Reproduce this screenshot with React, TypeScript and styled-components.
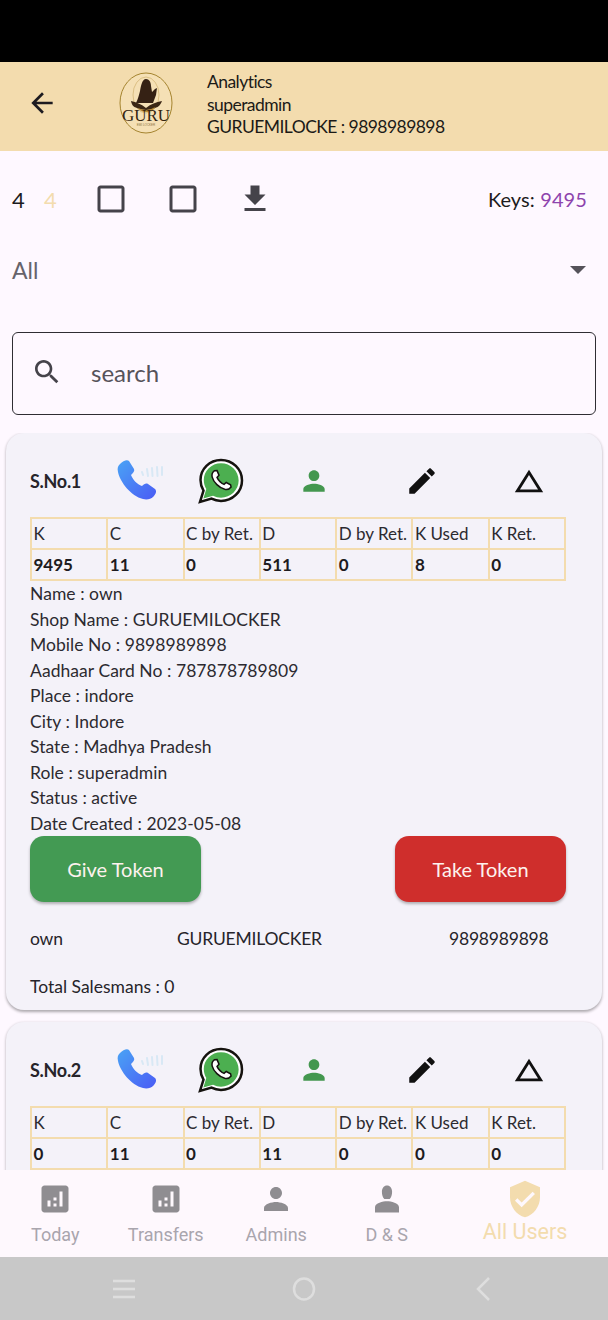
import { FC } from 'react';
import styled, { createGlobalStyle } from 'styled-components';

const GlobalStyle = createGlobalStyle`
  html, body { margin: 0; padding: 0; background: #000; }
  * { box-sizing: border-box; }
  body { font-family: 'Lato', 'Liberation Sans', sans-serif; color: #1d1b20; }
`;

const Screen = styled.div`
  width: 608px;
  height: 1320px;
  display: flex;
  flex-direction: column;
  overflow: hidden;
  background: #fef8ff;
`;

const StatusBar = styled.div`
  height: 62px;
  flex: none;
  background: #000;
`;

const Header = styled.header`
  height: 89px;
  flex: none;
  display: flex;
  align-items: center;
  background: #f3dcae;
  padding: 0 0 7px 26px;
`;

const BackButton = styled.div`
  width: 92px;
  display: flex;
`;

const HeaderText = styled.div`
  margin: 4px 0 0 33px;
  font-size: 17.5px;
  line-height: 22.5px;
  letter-spacing: -0.55px;
  color: #1b1a17;
`;

const Toolbar = styled.div`
  height: 96px;
  flex: none;
  display: flex;
  align-items: center;
  padding: 0 21px 0 12px;
`;

const Count = styled.span<{ $muted?: boolean }>`
  font-size: 22px;
  width: 32px;
  color: ${({ $muted }) => ($muted ? '#f3dcae' : '#1d1b20')};
`;

const ToolIcon = styled.div`
  width: 72px;
  display: flex;
  justify-content: center;
  margin-left: -1px;
  margin-right: 1px;
`;

const Keys = styled.div`
  margin-left: auto;
  font-size: 20px;
  letter-spacing: 0.1px;
`;

const KeysValue = styled.span`
  color: #8e44ad;
`;

const SelectRow = styled.div`
  height: 48px;
  flex: none;
  margin-top: -1px;
  display: flex;
  align-items: center;
  justify-content: space-between;
  padding: 0 22px 0 12px;
  font-size: 23px;
  color: #66636b;
`;

const Caret = styled.div`
  width: 0;
  height: 0;
  border-left: 8px solid transparent;
  border-right: 8px solid transparent;
  border-top: 8px solid #55525a;
`;

const SearchBox = styled.div`
  height: 83px;
  flex: none;
  margin: 38px 12px 18px;
  border: 1.5px solid #2f2d33;
  border-radius: 6px;
  display: flex;
  align-items: center;
  padding: 0 0 3px 18px;
  font-size: 24px;
  color: #56535a;
  gap: 28px;
`;

const CardList = styled.div`
  flex: 1;
  min-height: 0;
  overflow: hidden;
  display: flex;
  flex-direction: column;
  gap: 12px;
  padding: 0 6px;
`;

const Card = styled.section`
  flex: none;
  height: 577px;
  background: #f4f2f9;
  border-radius: 18px;
  box-shadow: 0 1.5px 3px rgba(0, 0, 0, 0.32);
  padding: 0 36px 0 24px;
  display: flex;
  flex-direction: column;
`;

const ActionRow = styled.div`
  height: 84px;
  flex: none;
  display: flex;
  align-items: center;
  padding-top: 12px;
`;

const SerialNo = styled.div`
  width: 89px;
  font-size: 18px;
  font-weight: 700;
  letter-spacing: -0.3px;
  color: #26242a;
`;

const ActionSlot = styled.div<{ $width: number }>`
  width: ${({ $width }) => $width}px;
  display: flex;
  justify-content: center;
  flex: none;
`;

const StatsTable = styled.table`
  border-collapse: collapse;
  table-layout: fixed;
  width: 536px;
  flex: none;
  td {
    border: 2px solid #f3dcae;
    height: 31px;
    padding: 0 0 0 1.500px;
    font-size: 17px;
    white-space: nowrap;
    overflow: hidden;
    color: #2c2a30;
  }
  tr:last-child td {
    font-weight: 700;
    color: #1d1b20;
  }
`;

const DetailList = styled.div`
  font-size: 17.5px;
  line-height: 25.5px;
  letter-spacing: 0.05px;
  color: #2c2a30;
`;

const TokenRow = styled.div`
  display: flex;
  justify-content: space-between;
`;

const TokenButton = styled.button<{ $bg: string }>`
  width: 171px;
  height: 66px;
  border: 0;
  border-radius: 14px;
  background: ${({ $bg }) => $bg};
  color: #fdf2ee;
  font-family: inherit;
  font-size: 20px;
  box-shadow: 0 2px 3px rgba(0, 0, 0, 0.28);
`;

const ContactRow = styled.div`
  display: grid;
  grid-template-columns: 147px 272px 1fr;
  margin-top: 25px;
  font-size: 17.5px;
  line-height: 24px;
  letter-spacing: -0.2px;
  color: #26242a;
`;

const SalesmanTotal = styled.div`
  margin-top: 24px;
  font-size: 17.5px;
  line-height: 24px;
  color: #26242a;
`;

const BottomNav = styled.nav`
  height: 87px;
  flex: none;
  display: grid;
  grid-template-columns: repeat(4, 110.5px) 1fr;
  background: #fef8fd;
`;

const NavItem = styled.div<{ $active?: boolean }>`
  display: flex;
  flex-direction: column;
  align-items: center;
  padding-top: ${({ $active }) => ($active ? '9px' : '11px')};
  gap: ${({ $active }) => ($active ? '1px' : '6px')};
  font-family: 'Roboto', sans-serif;
  font-size: ${({ $active }) => ($active ? '21.5px' : '18px')};
  line-height: 24px;
  color: ${({ $active }) => ($active ? '#f3dcae' : '#a9a5ad')};
`;

const SystemNav = styled.div`
  height: 63px;
  flex: none;
  background: #c8c8c8;
  display: grid;
  grid-template-columns: 248px 112px 1fr;
  align-items: center;
  justify-items: center;
`;

const Icon: FC<{ d: string; size: number; color: string }> = ({ d, size, color }) => (
  <svg width={size} height={size} viewBox="0 0 24 24" fill={color}>
    <path d={d} />
  </svg>
);

const PERSON = 'M12 12c2.21 0 4-1.79 4-4s-1.79-4-4-4-4 1.79-4 4 1.79 4 4 4zm0 2c-2.67 0-8 1.34-8 4v2h16v-2c0-2.66-5.33-4-8-4z';
const EDIT = 'M3 17.25V21h3.75L17.81 9.94l-3.75-3.75L3 17.25zM20.71 7.04c.39-.39.39-1.02 0-1.41l-2.34-2.34c-.39-.39-1.02-.39-1.41 0l-1.83 1.83 3.75 3.75 1.83-1.83z';
const TRIANGLE = 'M12 7.77L18.39 18H5.61L12 7.77M12 4L2 20h20L12 4z';
const DOWNLOAD = 'M19 9h-4V3H9v6H5l7 7 7-7zM5 18v2h14v-2H5z';
const SEARCH = 'M15.5 14h-.79l-.28-.27C15.41 12.59 16 11.11 16 9.5 16 5.91 13.09 3 9.5 3S3 5.91 3 9.5 5.91 16 9.5 16c1.61 0 3.09-.59 4.23-1.57l.27.28v.79l5 4.99L20.49 19l-4.99-5zm-6 0C7.01 14 5 11.99 5 9.5S7.01 5 9.5 5 14 7.01 14 9.5 11.99 14 9.5 14z';
const CHECK_BLANK = 'M19 5v14H5V5h14m0-2H5c-1.1 0-2 .9-2 2v14c0 1.1.9 2 2 2h14c1.1 0 2-.9 2-2V5c0-1.1-.9-2-2-2z';
const ARROW_BACK = 'M20 11H7.83l5.59-5.59L12 4l-8 8 8 8 1.41-1.41L7.83 13H20v-2z';
const SHIELD = 'M12 1L3 5v6c0 5.55 3.84 10.74 9 12 5.16-1.26 9-6.45 9-12V5l-9-4zm-2 16l-4-4 1.41-1.41L10 14.17l6.59-6.59L18 9l-8 8z';
const BARS = 'M19 3H5c-1.1 0-2 .9-2 2v14c0 1.1.9 2 2 2h14c1.1 0 2-.9 2-2V5c0-1.1-.9-2-2-2zM9 17H7v-4h2v4zm4 0h-2v-2h2v2zm0-4h-2v-2h2v2zm4 4h-2V7h2v10z';
const PERSON_TALL = 'M12 3c-2 0-3.4 1.8-3.4 4.2 0 2.2.6 3.8 1.6 4.8h3.6c1-1 1.6-2.6 1.6-4.8C15.400 4.800 14 3 12 3zM12 13.500c-2.700 0-8 1.200-8 4V21h16v-3.500c0-2.800-5.300-4-8-4z';
const WHATSAPP_BUBBLE = 'M23 2C11.500 2 2.500 11 2.500 22c0 4 1.100 7.500 3 10.600L2 44l11.500-3.400c2.900 1.500 6 2.300 9.500 2.300 11.500 0 21-9.200 21-20.500S34.500 2 23 2z';

const Logo: FC = () => (
  <svg width="56" height="64" viewBox="0 0 56 64">
    <ellipse cx="28" cy="32" rx="26" ry="30" fill="#f5e0b5" stroke="#a5842f" strokeWidth="1" />
    <ellipse cx="28" cy="24" rx="13" ry="18" fill="none" stroke="#c9a862" strokeWidth="0.6" />
    <path d="M28 8c3 0 5 3 5 7l1 6 3-3 2-1-1 7-3 8H18c2-4 3-8 4-12 1-5 2-12 6-12z" fill="#352114" />
    <path d="M13 30c5 1 10 3 15 7 5-4 10-6 16-7-2 5-4 6-7 7 -2 1-5 2-9 2s-7-1-9-2c-3-1-5-2-6-7z" fill="#3b2614" />
    <path d="M20 37c3 1 5 2 8 2s6-1 9-3c-1 3-5 5-9 5s-7-2-8-4z" fill="#b98a34" />
    <text x="28" y="50" textAnchor="middle" fontFamily="'Liberation Serif', serif" fontSize="17" fill="#33240f">GURU</text>
    <text x="28" y="55" textAnchor="middle" fontFamily="'Liberation Sans', sans-serif" fontSize="3" fill="#8a7440">EMI LOCKER</text>
  </svg>
);

const PhoneIcon: FC<{ id: string }> = ({ id }) => (
  <svg width="48" height="46" viewBox="0 0 48 46">
    <defs>
      <linearGradient id={id} x1="0" y1="0" x2="1" y2="1">
        <stop offset="0" stopColor="#4aa3f5" />
        <stop offset="1" stopColor="#4a5cf5" />
      </linearGradient>
    </defs>
    <path
      d="M3 6c3-3 7-5 9-3l5 8c1 2-1 4-3 6 2 5 6 9 11 11 2-2 4-3 6-2l7 5c2 2 1 5-2 8-2 2-6 3-10 2C14 38 3 24 1 14 0 10 1 8 3 6z"
      fill={`url(#${id})`}
    />
    <g stroke="#d8e8f5" strokeWidth="2" strokeLinecap="round">
      <path d="M25 14l1 3M30 11l1 7M35 10l.500 8M40 9l.500 9M45 9v8" />
    </g>
  </svg>
);

const WhatsAppIcon: FC = () => (
  <svg width="46" height="46" viewBox="0 0 46 46">
    <path d={WHATSAPP_BUBBLE} fill="#fff" stroke="#15130f" strokeWidth="2.500" />
    <g transform="translate(23 22.500) scale(0.84) translate(-23 -22.500)">
      <path d={WHATSAPP_BUBBLE} fill="#4caf50" />
      <path
        d="M15 11c-2 1.500-3.300 4-2.500 7.500 1.500 6 8.500 13 15 14.500 3.500.7 6-.7 7.500-2.800l-.6-2.700-5.200-2.600-2.600 2.200c-3-1-7-5-8.300-8.300l2.300-2.600-2.300-5.500z"
        fill="#fff"
        stroke="#15130f"
        strokeWidth="1.800"
      />
    </g>
  </svg>
);

const headers = ['K', 'C', 'C by Ret.', 'D', 'D by Ret.', 'K Used', 'K Ret.'];

interface UserCardProps {
  serial: number;
  stats: number[];
}

const UserCard: FC<UserCardProps> = ({ serial, stats }) => (
  <Card>
    <ActionRow>
      <SerialNo>S.No.{serial}</SerialNo>
      <ActionSlot $width={48}>
        <PhoneIcon id={`phone-${serial}`} />
      </ActionSlot>
      <ActionSlot $width={111}>
        <WhatsAppIcon />
      </ActionSlot>
      <ActionSlot $width={76}>
        <Icon d={PERSON} size={32} color="#43974f" />
      </ActionSlot>
      <ActionSlot $width={140}>
        <Icon d={EDIT} size={34} color="#111" />
      </ActionSlot>
      <ActionSlot $width={74}>
        <Icon d={TRIANGLE} size={34} color="#111" />
      </ActionSlot>
    </ActionRow>
    <StatsTable>
      <tbody>
        <tr>
          {headers.map((h) => (
            <td key={h}>{h}</td>
          ))}
        </tr>
        <tr>
          {stats.map((v, i) => (
            <td key={headers[i]}>{v}</td>
          ))}
        </tr>
      </tbody>
    </StatsTable>
    <DetailList>
      <div>Name : own</div>
      <div>Shop Name : GURUEMILOCKER</div>
      <div>Mobile No : 9898989898</div>
      <div>Aadhaar Card No : 787878789809</div>
      <div>Place : indore</div>
      <div>City : Indore</div>
      <div>State : Madhya Pradesh</div>
      <div>Role : superadmin</div>
      <div>Status : active</div>
      <div>Date Created : 2023-05-08</div>
    </DetailList>
    <TokenRow>
      <TokenButton $bg="#439a53">Give Token</TokenButton>
      <TokenButton $bg="#cf2e2c">Take Token</TokenButton>
    </TokenRow>
    <ContactRow>
      <span>own</span>
      <span>GURUEMILOCKER</span>
      <span>9898989898</span>
    </ContactRow>
    <SalesmanTotal>Total Salesmans : 0</SalesmanTotal>
  </Card>
);

export default function App() {
  return (
    <Screen>
      <GlobalStyle />
      <StatusBar />
      <Header>
        <BackButton>
          <Icon d={ARROW_BACK} size={32} color="#1d1b20" />
        </BackButton>
        <Logo />
        <HeaderText>
          <div>Analytics</div>
          <div>superadmin</div>
          <div>GURUEMILOCKE : 9898989898</div>
        </HeaderText>
      </Header>
      <Toolbar>
        <Count>4</Count>
        <Count $muted>4</Count>
        <ToolIcon>
          <Icon d={CHECK_BLANK} size={36} color="#45434a" />
        </ToolIcon>
        <ToolIcon>
          <Icon d={CHECK_BLANK} size={36} color="#45434a" />
        </ToolIcon>
        <ToolIcon>
          <Icon d={DOWNLOAD} size={36} color="#45434a" />
        </ToolIcon>
        <Keys>
          Keys: <KeysValue>9495</KeysValue>
        </Keys>
      </Toolbar>
      <SelectRow>
        All
        <Caret />
      </SelectRow>
      <SearchBox>
        <Icon d={SEARCH} size={32} color="#45434a" />
        search
      </SearchBox>
      <CardList>
        <UserCard serial={1} stats={[9495, 11, 0, 511, 0, 8, 0]} />
        <UserCard serial={2} stats={[0, 11, 0, 11, 0, 0, 0]} />
      </CardList>
      <BottomNav>
        <NavItem>
          <Icon d={BARS} size={36} color="#8f8d91" />
          Today
        </NavItem>
        <NavItem>
          <Icon d={BARS} size={36} color="#8f8d91" />
          Transfers
        </NavItem>
        <NavItem>
          <Icon d={PERSON} size={36} color="#8f8d91" />
          Admins
        </NavItem>
        <NavItem>
          <Icon d={PERSON_TALL} size={36} color="#8f8d91" />
          D &amp; S
        </NavItem>
        <NavItem $active>
          <Icon d={SHIELD} size={40} color="#f3dcae" />
          All Users
        </NavItem>
      </BottomNav>
      <SystemNav>
        <svg width="24" height="24" viewBox="0 0 24 24" stroke="#dedede" strokeWidth="2.500">
          <path d="M1 4h22M1 12h22M1 20h22" />
        </svg>
        <svg width="24" height="24" viewBox="0 0 24 24" fill="none" stroke="#dedede" strokeWidth="2.500">
          <ellipse cx="12" cy="12" rx="10" ry="10.500" />
        </svg>
        <svg width="24" height="24" viewBox="0 0 24 24" fill="none" stroke="#dedede" strokeWidth="2.500">
          <path d="M17 1L6 12l11 11" />
        </svg>
      </SystemNav>
    </Screen>
  );
}
